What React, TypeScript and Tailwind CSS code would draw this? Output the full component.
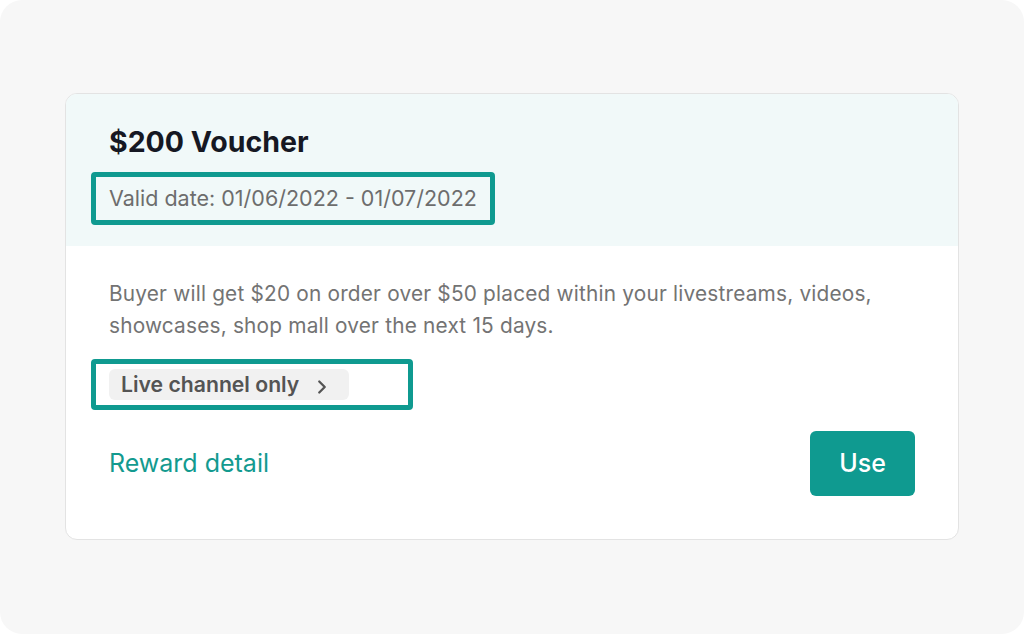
import { ChevronRight } from "lucide-react";

export default function App() {
  return (
    <div className="w-[1024px] h-[634px] bg-white" style={{ fontFamily: "Inter, 'Liberation Sans', sans-serif" }}>
      <div className="w-full h-full rounded-[22px] bg-[#f7f7f7] pt-[93px] pl-[65px]">
        <div className="w-[894px] h-[447px] rounded-[12px] border border-[#e3e3e3] bg-white overflow-hidden flex flex-col">
          {/* header */}
          <div className="bg-[#f1f9f9] h-[152px] pl-[25px] pt-[31px]">
            <h2 className="text-[28.5px] leading-[34px] font-bold text-[#161823] pl-[18px]">$200 Voucher</h2>
            <div className="mt-[13px] inline-flex items-center h-[53px] border-[5px] border-[#0f9a90] rounded-[4px] px-[13px]">
              <span className="text-[21.5px] text-[#6d6d6d]">Valid date: 01/06/2022 - 01/07/2022</span>
            </div>
          </div>

          {/* body */}
          <div className="flex-1 pl-[25px] pr-[43px] pt-[32px] pb-[43px] flex flex-col">
            <p className="pl-[18px] pr-[10px] text-[20.8px] tracking-[0.2px] leading-[32px] text-[#737373]">
              Buyer will get $20 on order over $50 placed within your livestreams, videos, showcases, shop mall over the next 15 days.
            </p>
            <div className="mt-[17px] w-[322px] h-[51px] border-[5px] border-[#0f9a90] rounded-[4px] pl-[13px] flex items-center">
              <div className="h-[31px] pl-[12px] pr-[16px] rounded-[6px] bg-[#f1f1f1] flex items-center gap-[12px]">
                <span className="text-[21.2px] font-semibold text-[#545454]">Live channel only</span>
                <ChevronRight className="w-[22px] h-[22px] text-[#545454] mt-[4px]" strokeWidth={2.5} />
              </div>
            </div>
            <div className="mt-auto flex items-center justify-between pl-[18px]">
              <a className="text-[25px] text-[#139a8f]">Reward detail</a>
              <button className="w-[105px] h-[65px] rounded-[6px] bg-[#0f9a90] text-white text-[25px] font-medium">Use</button>
            </div>
          </div>
        </div>
      </div>
    </div>
  );
}
